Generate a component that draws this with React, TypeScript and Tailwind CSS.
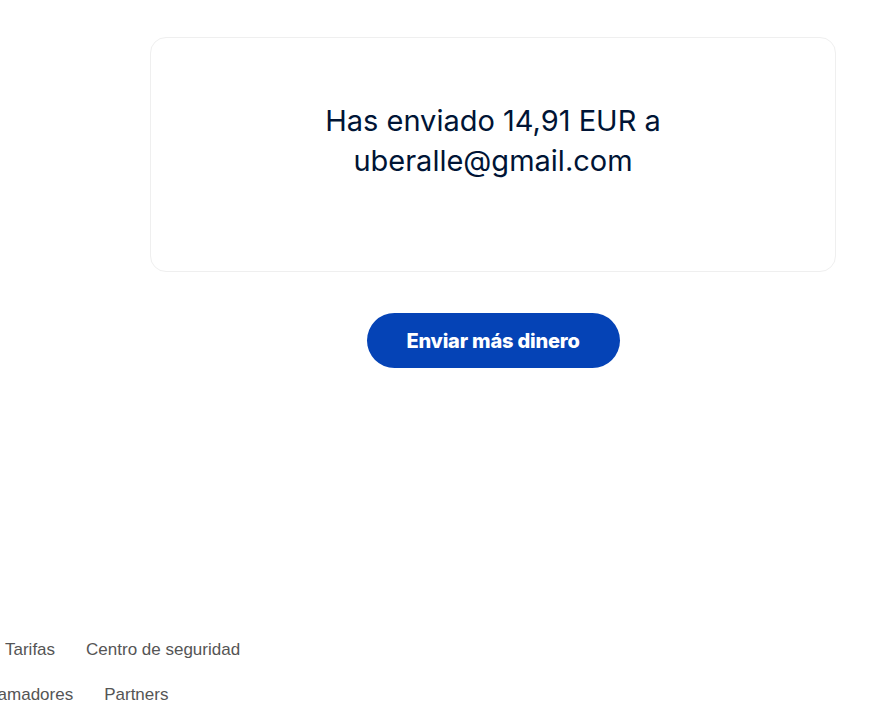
import React from "react";

const App = () => {
  return (
    <div className="w-[887px] h-[710px] overflow-hidden bg-white relative">
      <div className="pt-[37px] pl-[150px] pr-[51px]">
        {/* Confirmation card */}
        <div className="h-[235px] rounded-2xl border border-[#efefef] flex justify-center pt-[63px]">
          <p
            className="text-center text-[29px] leading-[40px] text-[#001435] w-[380px]"
            style={{ fontFamily: "Inter, sans-serif" }}
          >
            Has enviado 14,91 EUR a uberalle@gmail.com
          </p>
        </div>

        <div className="flex justify-center mt-[41px]">
          <button
            className="h-[55px] w-[253px] rounded-full bg-[#0543b6] text-white text-[20px] font-extrabold tracking-[-0.2px]"
            style={{ fontFamily: "Inter, sans-serif" }}
          >
            Enviar más dinero
          </button>
        </div>
      </div>

      {/* Footer links */}
      <footer
        className="mt-[272px] text-[17px] text-[#555]"
        style={{ fontFamily: "'Liberation Sans', Arial, sans-serif" }}
      >
        <ul className="flex gap-[31px] ml-[5px] h-[20px] items-center">
          <li>Tarifas</li>
          <li>Centro de seguridad</li>
        </ul>
        <ul className="flex gap-[31px] ml-[-44px] mt-[25px] h-[20px] items-center">
          <li>Programadores</li>
          <li>Partners</li>
        </ul>
      </footer>
    </div>
  );
};

export default App;
